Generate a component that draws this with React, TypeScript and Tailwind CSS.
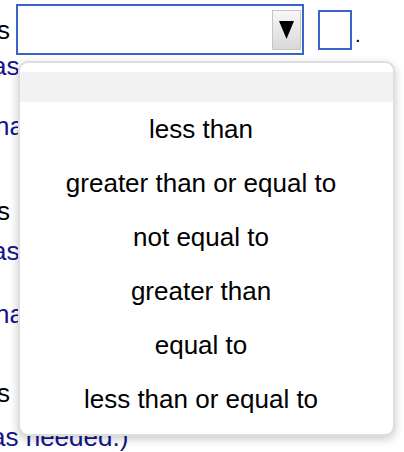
import React from "react";

const items = [
  "less than",
  "greater than or equal to",
  "not equal to",
  "greater than",
  "equal to",
  "less than or equal to",
];

export default function App() {
  return (
    <div
      className="relative h-[452px] w-[404px] overflow-hidden bg-white text-[26px] leading-[30px] text-black"
      style={{ fontFamily: '"Liberation Sans", Arial, sans-serif' }}
    >
      <div className="flex flex-col">
        <div className="mt-[4px] flex h-[51px] items-center">
          <span className="ml-[-3px] w-[19px] shrink-0">s</span>
          <div className="flex h-[51px] w-[288px] shrink-0 items-center justify-end border-2 border-[#3d63c7] bg-white pr-[1px]">
            <div className="flex h-[40px] w-[29px] items-center justify-center border border-[#c6c6c6] bg-gradient-to-b from-[#f7f7f7] to-[#d9d9d9]">
              <svg width="15" height="18" viewBox="0 0 15 18">
                <polygon points="0,0 15,0 7.5,18" fill="#000" />
              </svg>
            </div>
          </div>
          <div className="ml-[14px] h-[40px] w-[34px] shrink-0 border-2 border-[#3d63c7] bg-white" />
          <span className="ml-[3px] self-end pb-[10px] text-[20px] leading-[20px]">.</span>
        </div>
        <div className="mt-[-4px] ml-[-8px] text-[#14148a]">as</div>
        <div className="mt-[30px] ml-[-5px] text-[#14148a]">na</div>
        <div className="mt-[55px] ml-[-3px]">s</div>
        <div className="mt-[10px] ml-[-8px] text-[#14148a]">as</div>
        <div className="mt-[33px] ml-[-5px] text-[#14148a]">na</div>
        <div className="mt-[49px] ml-[-3px]">s</div>
        <div className="mt-[14px] ml-[-9px] whitespace-nowrap text-[#14148a]">as needed.)</div>
      </div>

      <div className="absolute left-[18px] top-[61px] flex h-[375px] w-[377px] flex-col rounded-[10px] border-2 border-[#dedede] bg-white pt-[9px] pb-[8px] shadow-[0_3px_10px_rgba(0,0,0,0.22)]">
        <div className="h-[30px] bg-[#f2f2f2]" />
        {items.map((t) => (
          <div
            key={t}
            className="flex h-[54px] items-center justify-center whitespace-nowrap pr-[11px] text-[26px] leading-[30px]"
          >
            {t}
          </div>
        ))}
      </div>
    </div>
  );
}
